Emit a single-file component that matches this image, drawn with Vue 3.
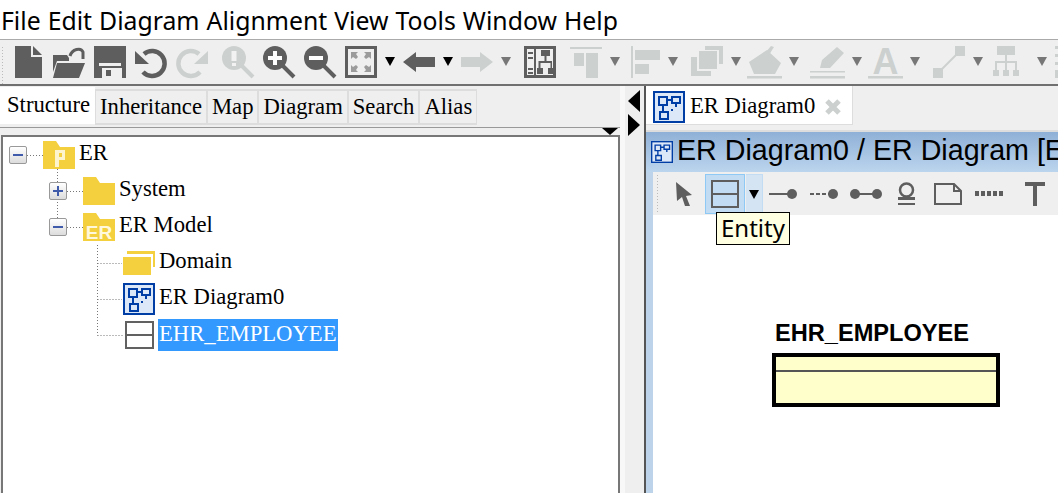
<script setup>
const menus = ['File', 'Edit', 'Diagram', 'Alignment', 'View', 'Tools', 'Window', 'Help']
const tabs = ['Structure', 'Inheritance', 'Map', 'Diagram', 'Search', 'Alias']
</script>

<template>
  <div class="app">
    <div class="menu"><span v-for="m in menus" :key="m">{{ m }}</span></div>

    <div class="tools">
      <i class="handle"></i>
      <svg class="t first" viewBox="0 0 32 32"><path class="k" d="M3 0H19V11H30V32H3Z"/><path class="k" d="M21 0L30 9H21Z"/></svg>
      <svg class="t m9" viewBox="0 0 32 32"><path class="k" d="M4 17H32L26 32H0Z"/><path class="k" d="M0 9H14L16 12V15H4L0 26Z"/><path class="ks" d="M17 10C19 3 28 1 30 6V13" stroke-width="3"/></svg>
      <svg class="t m9" viewBox="0 0 32 32"><path class="k" fill-rule="evenodd" d="M0 0H32V32H0ZM5 17V20H27V17ZM8 22V32H28V22ZM12 24H17V30H12Z"/></svg>
      <svg class="t m9" viewBox="0 0 32 32"><path class="ks" stroke-width="4.5" d="M9 8A12.5 12.5 0 1 1 8 26"/><path class="k" d="M0 5L14 18H0Z"/></svg>
      <svg class="t m9" viewBox="0 0 32 32"><path class="ds" stroke-width="4.5" d="M23 8A12.5 12.5 0 1 0 24 26"/><path class="d" d="M32 5L18 18H32Z"/></svg>
      <svg class="t m14" viewBox="0 0 32 32"><circle class="d" cx="12" cy="12" r="12"/><rect x="9.500" y="5" width="5" height="10" fill="#f2f2f2"/><rect x="10" y="17" width="4" height="3" fill="#f2f2f2"/><path class="ds" stroke-width="4" d="M20 20L31 31"/></svg>
      <svg class="t m9" viewBox="0 0 32 32"><circle class="k" cx="12" cy="12" r="12"/><path fill="#fff" d="M10 5H14V10H19V14H14V19H10V14H5V10H10Z"/><path class="ks" stroke-width="4" d="M20 20L31 31"/></svg>
      <svg class="t m9" viewBox="0 0 32 32"><circle class="k" cx="12" cy="12" r="12"/><path fill="#fff" d="M5 10H19V14H5Z"/><path class="ks" stroke-width="4" d="M20 20L31 31"/></svg>
      <svg class="t m9" viewBox="0 0 32 32"><rect x="1.500" y="1.500" width="29" height="29" class="ks" stroke-width="3"/><path fill="#9b9b9b" d="M6 6H13L11 8L13 11L11 13L8 11L6 13ZM26 6V13L24 11L21 13L19 11L21 8L19 6ZM6 26V19L8 21L11 19L13 21L11 24L13 26ZM26 26H19L21 24L19 21L21 19L24 21L26 19Z"/></svg>
      <i class="arrow m8"></i>
      <svg class="t m8" viewBox="0 0 32 32"><path class="k" d="M0 16L13 6V11H32V21H13V26Z"/></svg>
      <i class="arrow m8"></i>
      <svg class="t m8" viewBox="0 0 32 32"><path class="d" d="M32 16L19 6V11H0V21H19V26Z"/></svg>
      <i class="arrow g m8"></i>
      <svg class="t m13" viewBox="0 0 32 32"><rect x="1.500" y="1.500" width="29" height="29" class="ks" stroke-width="3"/><path class="k" d="M10 1H12V31H10ZM4 6H9V8H4ZM4 11H9V13H4ZM4 22H9V24H4ZM4 26H9V28H4ZM17 4H26V10H22.500V15H28V22H30V28H24V22H26.500V17H16.500V22H19V28H13V22H14.500V15H20.500V10H17Z"/></svg>
      <svg class="t m14" viewBox="0 0 32 32"><path class="d" d="M0 1H32V3H0ZM4 7H14V20H4ZM16 7H28V32H16Z"/></svg>
      <i class="arrow g m8"></i>
      <svg class="t m11" viewBox="0 0 32 32"><path class="d" d="M0 0H2V32H0ZM4 4H29V14H4ZM4 18H18V28H4Z"/></svg>
      <i class="arrow g m5"></i>
      <svg class="t m13" viewBox="0 0 32 32"><path class="d" d="M14 0H32V18H28V4H14ZM8 5H26V23H8ZM0 11H6V25H20V30H0Z"/></svg>
      <i class="arrow g m8"></i>
      <svg class="t wide m6" viewBox="0 0 35 32"><path class="d" d="M2 16L20 4L34 17L28 28H7ZM18 7L24 0L27 1L22 9Z"/><path class="d" d="M0 30H35V32.500H0Z"/></svg>
      <i class="arrow g m7"></i>
      <svg class="t wide m11" viewBox="0 0 35 32"><path class="d" d="M10 22L12 14L27 1L34 7L20 22ZM0 25H35V26.500H0ZM0 30H35V32.500H0Z"/></svg>
      <i class="arrow g m7"></i>
      <svg class="t wide m6" viewBox="0 0 35 32"><text x="17.500" y="28" class="aicon">A</text><path class="d" d="M0 30H35V32.500H0Z"/></svg>
      <i class="arrow g m7"></i>
      <svg class="t m13" viewBox="0 0 32 32"><path class="d" d="M0 22H10V32H0ZM22 0H32V10H22Z"/><path class="ds" stroke-width="2" d="M8 24L24 8"/></svg>
      <i class="arrow g m8"></i>
      <svg class="t m10" viewBox="0 0 32 32"><path class="d" d="M4 0H22V9H4ZM0 24H6V30H0ZM10 24H16V30H10ZM20 24H26V30H20ZM12 9H14V15H24V24H22V17H14V24H12V17H4V24H2V15H12Z"/></svg>
      <i class="arrow g m12"></i>
      <svg class="t m8" viewBox="0 0 32 32"><path class="d" d="M0 0H32V3H0ZM0 8H32V11H0ZM0 16H32V19H0ZM0 24H20V32H0Z"/></svg>
    </div>

    <div class="main">
      <section class="left">
        <nav class="tabs">
          <span v-for="(t, i) in tabs" :key="t" class="tab" :class="{ on: i === 0 }">{{ t }}</span>
        </nav>
        <div class="rule"><i class="mini"></i></div>
        <div class="tree">
          <svg class="lines" width="400" height="260">
            <path d="M27 18.500H43M57.500 32V82M67 54.500H83M67 90.500H83M97.500 108V198.500M97.500 126.500H122M97.500 162.500H122M97.500 198.500H124"/>
          </svg>
          <div class="row l0">
            <span class="box minus"></span>
            <svg class="ico" viewBox="0 0 32 28"><path class="folder" d="M0 0H13L17 6H32V28H0Z"/><path fill="#fdf3cc" fill-rule="evenodd" d="M12 9H22V19H16V26H12ZM16 12V16H19V12Z"/></svg>
            <span class="lbl">ER</span>
          </div>
          <div class="row l1">
            <span class="box plus"></span>
            <svg class="ico" viewBox="0 0 32 28"><path class="folder" d="M0 0H13L17 6H32V28H0Z"/></svg>
            <span class="lbl">System</span>
          </div>
          <div class="row l1">
            <span class="box minus"></span>
            <svg class="ico" viewBox="0 0 32 28"><path class="folder" d="M0 0H13L17 6H32V28H0Z"/><text x="16" y="26" class="ertext">ER</text></svg>
            <span class="lbl">ER Model</span>
          </div>
          <div class="row l2">
            <svg class="ico" viewBox="0 0 32 24"><path class="folder" d="M4 0H32V16H30V3H4Z"/><path class="folder" d="M0 6H28V24H0Z"/></svg>
            <span class="lbl">Domain</span>
          </div>
          <div class="row l2">
            <svg class="ico big" viewBox="0 0 32 32"><rect x="1" y="1" width="30" height="30" fill="#dce8f8" stroke="#003da5" stroke-width="2"/><path fill="none" stroke="#003da5" stroke-width="2" d="M6 6H14V14H6ZM19 6H27V12H19ZM7 21H15V28H7ZM10 14V21M14 9H19M23 12V16"/><path fill="#003da5" d="M18 18H20V20H18Z"/></svg>
            <span class="lbl">ER Diagram0</span>
          </div>
          <div class="row l2">
            <svg class="ico" viewBox="0 0 32 28"><path fill="none" stroke="#616161" stroke-width="2" d="M3 1H30V27H3ZM3 14H30"/></svg>
            <span class="lbl sel">EHR_EMPLOYEE</span>
          </div>
        </div>
      </section>

      <div class="split"><i class="tri l"></i><i class="tri r"></i></div>

      <section class="right">
        <div class="doc-tabs">
          <div class="doc-tab">
            <svg class="dicon" viewBox="0 0 32 32"><rect x="1" y="1" width="30" height="30" fill="#dce8f8" stroke="#003da5" stroke-width="2"/><path fill="none" stroke="#003da5" stroke-width="2" d="M6 6H14V14H6ZM19 6H27V12H19ZM7 21H15V28H7ZM10 14V21M14 9H19M23 12V16"/><path fill="#003da5" d="M18 18H20V20H18Z"/></svg>
            <span class="dname">ER Diagram0</span>
            <svg class="close" viewBox="0 0 16 16"><path fill="none" stroke="#ccd0cf" stroke-width="5" d="M2 2L14 14M14 2L2 14"/></svg>
          </div>
        </div>
        <div class="title">
          <svg class="ticon" viewBox="0 0 32 32"><rect x="1" y="1" width="30" height="30" fill="#dce8f8" stroke="#003da5" stroke-width="2"/><path fill="none" stroke="#003da5" stroke-width="2" d="M6 6H14V14H6ZM19 6H27V12H19ZM7 21H15V28H7ZM10 14V21M14 9H19M23 12V16"/></svg>
          <span class="title-text">ER Diagram0 / ER Diagram [E</span>
        </div>
        <div class="body">
          <div class="palette">
            <i class="handle h2"></i>
            <svg class="pointer" viewBox="0 0 16 24"><path class="k" d="M0 0L16 13L10 14L14 24L9 24L6 15L1 19Z"/></svg>
            <div class="hover">
              <svg class="ent" viewBox="0 0 28 28"><path fill="none" stroke="#5e5e5e" stroke-width="2" d="M1 1H27V27H1ZM1 14H27"/></svg>
            </div>
            <div class="hover2"><i class="arrow"></i></div>
            <svg class="p1" width="28" height="12" viewBox="0 0 28 12"><path class="k" d="M0 5H20V7H0Z"/><circle class="k" cx="23" cy="6" r="5"/></svg>
            <svg class="p2" width="28" height="12" viewBox="0 0 28 12"><path class="k" d="M0 5H4V7H0ZM6 5H10V7H6ZM12 5H16V7H12ZM18 5H20V7H18Z"/><circle class="k" cx="23" cy="6" r="5"/></svg>
            <svg class="p3" width="32" height="12" viewBox="0 0 32 12"><path class="k" d="M5 5H27V7H5Z"/><circle class="k" cx="5" cy="6" r="5"/><circle class="k" cx="27" cy="6" r="5"/></svg>
            <svg class="p4" width="17" height="24" viewBox="0 0 17 24"><circle cx="8.500" cy="8" r="6.500" fill="none" stroke="#5e5e5e" stroke-width="2.500"/><path class="k" d="M0 15H17V18H0ZM0 21H17V23H0Z"/></svg>
            <svg class="p5" width="28" height="22" viewBox="0 0 28 22"><path fill="none" stroke="#5e5e5e" stroke-width="2" d="M1 1H20L27 8V21H1ZM20 1V8H27"/></svg>
            <svg class="p6" width="28" height="5" viewBox="0 0 28 5"><path class="k" d="M0 0H4V5H0ZM6 0H10V5H6ZM12 0H16V5H12ZM18 0H22V5H18ZM24 0H28V5H24Z"/></svg>
            <svg class="p7" width="20" height="24" viewBox="0 0 20 24"><path class="k" d="M0 0H20V4H12V24H8V4H0Z"/></svg>
          </div>
          <div class="canvas">
            <div class="tip">Entity</div>
            <div class="node">
              <div class="node-name">EHR_EMPLOYEE</div>
              <div class="node-box"><div class="node-head"></div></div>
            </div>
          </div>
        </div>
      </section>
    </div>
  </div>
</template>

<style>
html, body { margin: 0; overflow: hidden; background: #fff; }
</style>

<style scoped>
.app { width: 1058px; height: 493px; display: flex; flex-direction: column; overflow: hidden; font-family: "Liberation Serif", serif; color: #000; }

.menu { height: 39px; border-bottom: 1px solid #aaa; display: flex; gap: 7px; padding-left: 1px; font: 24.800px/40px "Noto Sans", sans-serif; white-space: nowrap; flex: none; }

.tools { height: 46px; box-sizing: border-box; background: #efefef; border-bottom: 2px solid #707070; display: flex; align-items: flex-start; padding-top: 6px; white-space: nowrap; overflow: hidden; flex: none; }
.handle { width: 3px; height: 38px; flex: none; margin-left: 1px; background-image: radial-gradient(#bbb 1px, transparent 1px); background-size: 3px 3px; }
.t { width: 32px; height: 32px; flex: none; overflow: visible; }
.t.wide { width: 35px; }
.first { margin-left: 8px; }
.m5 { margin-left: 5px; } .m6 { margin-left: 6px; } .m7 { margin-left: 7px; } .m8 { margin-left: 8px; } .m9 { margin-left: 9px; }
.m10 { margin-left: 10px; } .m11 { margin-left: 11px; } .m12 { margin-left: 12px; } .m13 { margin-left: 13px; } .m14 { margin-left: 14px; }
.k { fill: #5e5e5e; }
.d { fill: #ccd0cf; }
.ks { fill: none; stroke: #5e5e5e; }
.ds { fill: none; stroke: #ccd0cf; }
.aicon { font: bold 36px "Liberation Sans", sans-serif; fill: #ccd0cf; text-anchor: middle; }
.ertext { font: bold 19px "Liberation Sans", sans-serif; fill: #fff8dc; text-anchor: middle; }
.arrow { width: 0; height: 0; flex: none; margin-top: 11px; border-left: 5px solid transparent; border-right: 5px solid transparent; border-top: 9px solid #000; }
.arrow.g { border-top-color: #777; }

.main { flex: 1; display: flex; min-height: 0; background: #efefef; }

.left { width: 620px; flex: none; display: flex; flex-direction: column; min-height: 0; }
.tabs { display: flex; height: 38px; padding-top: 1px; box-sizing: border-box; flex: none; }
.tab { font-size: 22.670px; line-height: 32px; padding: 0 4px; border: 1px solid #ddd; border-width: 2px 1px 2px 1px; margin-top: 2px; height: 32px; }
.tab.on { background: #fff; border: 0; margin-top: 0; height: 37px; line-height: 36px; padding: 0 5px 0 7px; }
.rule { height: 1px; margin-top: 3px; background: #999; position: relative; flex: none; }
.mini { position: absolute; right: 2px; top: 1px; width: 0; height: 0; border-left: 8px solid transparent; border-right: 8px solid transparent; border-top: 7px solid #000; }
.tree { position: relative; flex: 1; margin: 7px 0 0 1px; background: #fff; border: 2px solid #777; border-bottom: 0; min-height: 0; }
.lines { position: absolute; left: -3px; top: 0; }
.lines path { fill: none; stroke: #777; stroke-width: 1; stroke-dasharray: 1 2; }
.row { height: 36px; display: flex; align-items: center; position: relative; font-size: 22.670px; }
.l0 { padding-left: 6px; }
.l1 { padding-left: 46px; }
.l2 { padding-left: 120px; }
.box { width: 18px; height: 18px; box-sizing: border-box; border: 1px solid #999; border-radius: 2px; background: linear-gradient(#fff, #dcdcdc); margin-right: 16px; position: relative; flex: none; }
.box::before { content: ""; position: absolute; left: 3px; top: 7px; width: 10px; height: 2px; background: #3f5ba9; }
.plus::after { content: ""; position: absolute; left: 7px; top: 3px; width: 2px; height: 10px; background: #3f5ba9; }
.ico { width: 32px; height: 28px; flex: none; overflow: visible; }
.ico.big { height: 32px; }
.folder { fill: #f4d03f; }
.lbl { margin-left: 4px; line-height: 32px; white-space: nowrap; position: relative; top: -2px; }
.sel { margin-left: 3px; padding: 0 2px 0 1px; background: #39f; color: #fff; top: 0; height: 32px; line-height: 30px; }

.split { width: 24px; flex: none; position: relative; background: linear-gradient(90deg, #f8f8f8 5px, #efefef 5px); }
.tri { position: absolute; left: 8px; width: 0; height: 0; border-top: 11.500px solid transparent; border-bottom: 11.500px solid transparent; }
.tri.l { top: 4px; border-right: 12px solid #000; }
.tri.r { top: 28px; border-left: 12px solid #000; }

.right { flex: 1; min-width: 0; border-left: 2px solid #555; display: flex; flex-direction: column; }
.doc-tabs { height: 46px; flex: none; box-sizing: border-box; border-bottom: 2px solid #ddd; }
.doc-tab { width: 207px; height: 39px; box-sizing: border-box; background: #fff; border: solid #ddd; border-width: 0 1px 1px 0; display: flex; align-items: center; padding: 4px 0 0 7px; }
.dicon { width: 32px; height: 32px; flex: none; }
.dname { font-size: 22.670px; margin-left: 5px; white-space: nowrap; position: relative; top: -1px; }
.close { width: 16px; height: 16px; margin-left: 10px; flex: none; }
.title { height: 40px; flex: none; background: linear-gradient(#8fb0d6, #bcd5ee); display: flex; align-items: center; white-space: nowrap; overflow: hidden; font: 28.670px "Liberation Sans", sans-serif; color: #000; padding-left: 5px; }
.title-text { position: relative; top: -2px; }
.ticon { width: 22px; height: 22px; flex: none; margin-right: 4px; }

.body { flex: 1; display: flex; flex-direction: column; min-height: 0; border-left: 7px solid #bcd3ea; }
.palette { height: 43px; flex: none; background: #efefef; display: flex; align-items: center; position: relative; }
.h2 { margin-left: 3px; height: 40px; }
.pointer { width: 16px; height: 24px; margin-left: 17px; flex: none; }
.hover { width: 40px; height: 40px; box-sizing: border-box; background: #c2dcf3; border: 1px solid #8ec8f5; margin-left: 13px; display: flex; align-items: center; justify-content: center; flex: none; }
.ent { width: 28px; height: 28px; }
.hover2 { width: 17px; height: 40px; box-sizing: border-box; background: #d5e4f3; border: 1px solid #c2dcf3; border-left: 0; margin-left: 1px; display: flex; align-items: center; justify-content: center; flex: none; }
.hover2 .arrow { margin-top: 2px; }
.p1 { margin-left: 6px; flex: none; }
.p2 { margin-left: 13px; flex: none; }
.p3 { margin-left: 12px; flex: none; }
.p4 { margin-left: 16px; flex: none; }
.p5 { margin-left: 19px; flex: none; }
.p6 { margin-left: 13px; flex: none; }
.p7 { margin-left: 22px; flex: none; }

.canvas { flex: 1; background: #fff; position: relative; }
.tip { position: absolute; left: 63px; top: -3px; height: 33px; box-sizing: border-box; padding: 0 4px; background: #ffffe1; border: 1px solid #000; font: 24px/30px "Noto Sans", sans-serif; z-index: 2; }
.node { position: absolute; left: 119px; top: 105px; width: 228px; }
.node-name { font: bold 23.600px/26px "Liberation Sans", sans-serif; margin-left: 3px; white-space: nowrap; height: 33px; }
.node-box { height: 54px; box-sizing: border-box; background: #ffc; border: 4px solid #000; }
.node-head { height: 13px; border-bottom: 2px solid #555; }
</style>
